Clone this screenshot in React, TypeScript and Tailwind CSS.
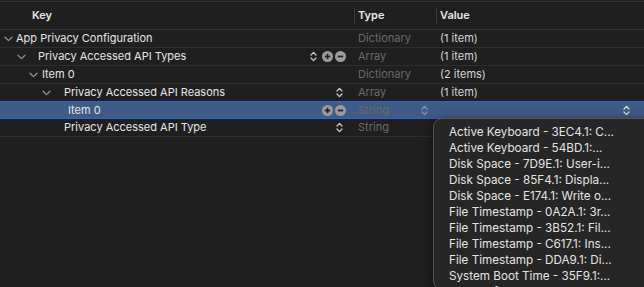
import React from "react";

type Row = {
  key: string;
  chevronX?: number;
  textX: number;
  type: string;
  value: string;
  keyIcons?: ("updown" | "plus" | "minus")[];
  typeUpDown?: boolean;
  valueUpDown?: boolean;
  selected?: boolean;
};

const rows: Row[] = [
  { key: "App Privacy Configuration", chevronX: 4, textX: 16, type: "Dictionary", value: "(1 item)" },
  {
    key: "Privacy Accessed API Types",
    chevronX: 17,
    textX: 38,
    type: "Array",
    value: "(1 item)",
    keyIcons: ["updown", "plus", "minus"],
  },
  { key: "Item 0", chevronX: 29, textX: 42, type: "Dictionary", value: "(2 items)" },
  {
    key: "Privacy Accessed API Reasons",
    chevronX: 42,
    textX: 64,
    type: "Array",
    value: "(1 item)",
    keyIcons: ["updown"],
  },
  {
    key: "Item 0",
    textX: 68,
    type: "String",
    value: "",
    keyIcons: ["plus", "minus"],
    typeUpDown: true,
    valueUpDown: true,
    selected: true,
  },
  { key: "Privacy Accessed API Type", textX: 64, type: "String", value: "", keyIcons: ["updown"] },
];

const reasons = [
  "Active Keyboard - 3EC4.1: C...",
  "Active Keyboard - 54BD.1:...",
  "Disk Space - 7D9E.1: User-i...",
  "Disk Space - 85F4.1: Displa...",
  "Disk Space - E174.1: Write o...",
  "File Timestamp - 0A2A.1: 3r...",
  "File Timestamp - 3B52.1: Fil...",
  "File Timestamp - C617.1: Ins...",
  "File Timestamp - DDA9.1: Di...",
  "System Boot Time - 35F9.1:...",
  "User Defaults - 1C8F.1: Acc...",
];

const Chevron = () => (
  <svg width="9" height="6" viewBox="0 0 9 6" className="shrink-0">
    <path d="M1 1.2 L4.5 4.6 L8 1.2" fill="none" stroke="#9a9a9a" strokeWidth="1.2" strokeLinecap="round" strokeLinejoin="round" />
  </svg>
);

const UpDown = ({ color = "#c8c8c8" }: { color?: string }) => (
  <svg width="7" height="11" viewBox="0 0 7 11" className="shrink-0">
    <path d="M1 4 L3.5 1.4 L6 4 M1 7 L3.5 9.6 L6 7" fill="none" stroke={color} strokeWidth="1.3" strokeLinecap="round" strokeLinejoin="round" />
  </svg>
);

const CircleBtn = ({ plus }: { plus?: boolean }) => (
  <svg width="11" height="11" viewBox="0 0 11 11" className="shrink-0">
    <circle cx="5.5" cy="5.5" r="5.5" fill="#9b9b9b" />
    <path d="M2.8 5.5 H8.2" stroke="#222" strokeWidth="1.7" />
    {plus && <path d="M5.5 2.8 V8.2" stroke="#222" strokeWidth="1.7" />}
  </svg>
);

export default function App() {
  return (
    <div
      className="relative w-[644px] h-[287px] overflow-hidden bg-[#1f1f1f] text-[11px]"
      style={{ fontFamily: "Inter, 'Liberation Sans', sans-serif" }}
    >
      <div className="h-[2px] border-b border-[#333]" />
      {/* Header */}
      <div className="grid grid-cols-[354px_82px_1fr] h-[28px] items-center border-b border-[#363636] font-semibold text-[#e8e8e8]">
        <div className="pl-[32px]">Key</div>
        <div className="h-[16px] border-l border-[#3a3a3a] pl-[3px] flex items-center">Type</div>
        <div className="h-[16px] border-l border-[#3a3a3a] pl-[3px] flex items-center">Value</div>
      </div>

      {/* Rows */}
      {rows.map((r, i) => (
        <div
          key={i}
          className={`grid grid-cols-[354px_82px_1fr] h-[18px] items-center border-b ${
            r.selected ? "bg-[#3f5b87] border-[#2f63d6] border-t -mt-px" : "border-[#2e2e2e]"
          }`}
        >
          <div className="relative flex items-center h-full pr-[8px]" style={{ paddingLeft: r.textX }}>
            {r.chevronX !== undefined && (
              <span className="absolute top-[6px] flex" style={{ left: r.chevronX }}>
                <Chevron />
              </span>
            )}
            <span className="text-[#e6e6e6]">{r.key}</span>
            <div className="ml-auto flex items-center">
              {r.keyIcons?.map((ic, k) =>
                ic === "updown" ? (
                  <span key={k} className={`flex ${r.keyIcons!.length > 1 ? "mr-[5px]" : "mr-[3px]"}`}>
                    <UpDown />
                  </span>
                ) : (
                  <span key={k} className={`flex ${ic === "plus" ? "mr-[2px]" : ""}`}>
                    <CircleBtn plus={ic === "plus"} />
                  </span>
                )
              )}
            </div>
          </div>
          <div className="flex items-center pl-[4px] pr-[8px] text-[#6a6a6a]">
            <span>{r.type}</span>
            {r.typeUpDown && (
              <span className="ml-auto flex">
                <UpDown color="#8a96aa" />
              </span>
            )}
          </div>
          <div className="flex items-center pl-[4px] pr-[14px] text-[#d6d6d6]">
            <span>{r.value}</span>
            {r.valueUpDown && (
              <span className="ml-auto flex">
                <UpDown color="#e0e0e0" />
              </span>
            )}
          </div>
        </div>
      ))}

      {/* Popup menu */}
      <div className="absolute left-[433px] top-[118px] w-[230px] h-[172px] rounded-[9px] border border-[#555] bg-[#262626] shadow-[0_4px_14px_rgba(0,0,0,0.6)] overflow-hidden pt-[5px]">
        {reasons.map((t) => (
          <div key={t} className="h-[16px] leading-[16px] pl-[15px] text-[11.7px] text-[#e4e4e4] whitespace-nowrap">
            {t}
          </div>
        ))}
      </div>
    </div>
  );
}
